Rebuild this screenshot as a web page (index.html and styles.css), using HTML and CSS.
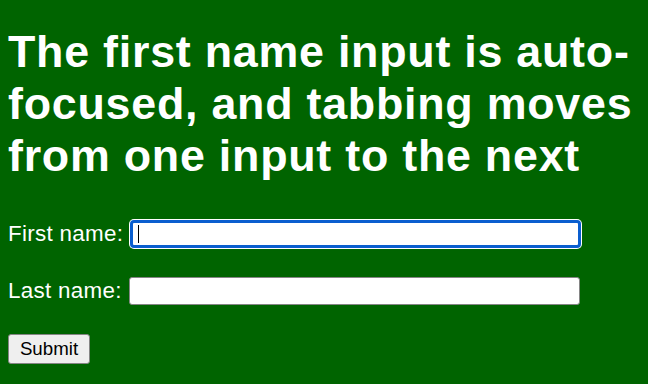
FILE: index.html
```html
<!DOCTYPE html>
<html lang="en">
<head>
  <meta charset="UTF-8" />
  <title>Autofocus form</title>
  <link rel="stylesheet" href="styles.css">
</head>
<body>
  <h1>The first name input is auto-focused, and tabbing moves from one input to the next</h1>
  <form>
    <div class="row">
      <label for="first">First name:</label>
      <span class="field">
        <input type="text" id="first" class="focused" />
        <span class="caret"></span>
      </span>
    </div>
    <div class="row">
      <label for="last">Last name:</label>
      <span class="field">
        <input type="text" id="last" />
      </span>
    </div>
    <div class="row">
      <button type="button">Submit</button>
    </div>
  </form>
</body>
</html>
```

FILE: styles.css
```css
body {
  margin: 0;
  padding: 8px;
  background: #006400;
  color: #fff;
  font-family: 'Liberation Sans', Arial, sans-serif;
  font-size: 22.4px;
}

h1 {
  font-size: 44.8px;
  line-height: 52px;
  letter-spacing: 0.75px;
  font-weight: bold;
  margin: 17px 0 39px;
}

.row {
  display: flex;
  align-items: center;
  gap: 7px;
  margin-bottom: 29px;
}

.row label {
  letter-spacing: 0.3px;
}

.field {
  position: relative;
  display: block;
  height: 28px;
}

.row input {
  display: block;
  width: 451px;
  height: 28px;
  box-sizing: border-box;
  border: 1px solid #858585;
  border-radius: 3px;
  background: #fff;
  font-size: 16px;
  outline: none;
}

.row input.focused {
  border: 3px solid #0a5ecf;
  border-radius: 4px;
  box-shadow: 0 0 0 1px #fff;
}

.caret {
  position: absolute;
  left: 8px;
  top: 5px;
  width: 1px;
  height: 18px;
  background: #000;
}

button {
  font-family: 'Liberation Sans', Arial, sans-serif;
  font-size: 18.7px;
  padding: 0 10px;
  height: 30px;
  width: 82px;
  background: #efefef;
  border: 1px solid #858585;
  border-radius: 3px;
  color: #000;
}
```
